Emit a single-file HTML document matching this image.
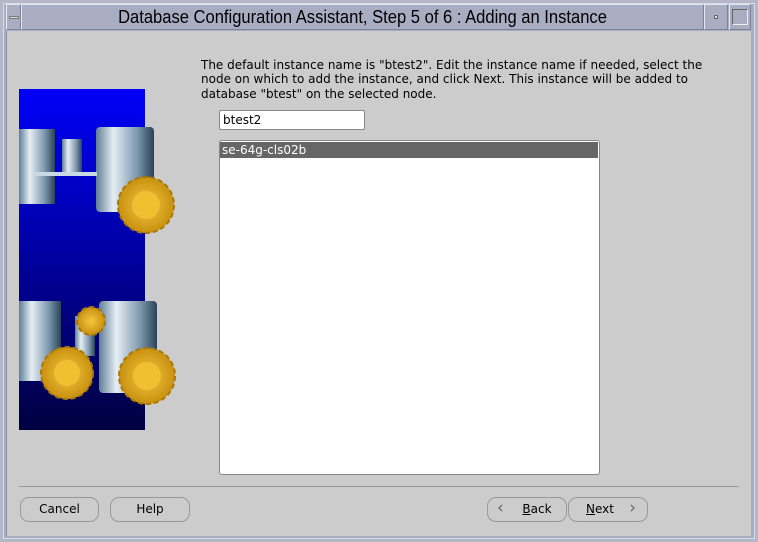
<!DOCTYPE html>
<html><head><meta charset="utf-8"><style>
*{margin:0;padding:0;box-sizing:border-box}
body{width:758px;height:542px;background:#b4b7c8;position:relative;overflow:hidden;font-family:"DejaVu Sans","Liberation Sans",sans-serif;}
.abs{position:absolute}
#frame{left:3px;top:3px;width:752px;height:536px;background:#a9adc2;border:1px solid #d8dae6;}
#client{left:6px;top:31px;width:745px;height:505px;background:#cccccc;border-left:1px solid #8a8ea2;}
.tb{position:absolute;top:4px;height:26px;border:1px solid #e6e8f0;border-right-color:#7e8296;border-bottom-color:#7e8296;}
.txt{font-size:12px;color:#000;line-height:14.3px}
.btn{position:absolute;top:497px;height:25px;border:1px solid #999;border-radius:9px;font-size:12px;text-align:center;line-height:23px;background:#cccccc}
</style></head><body>
<div class="abs" id="frame"></div>
<div class="tb" style="left:6px;width:15px"></div>
<div class="abs" style="left:9px;top:16px;width:10px;height:3px;border:1px solid #777;background:#ddd"></div>
<div class="tb" style="left:21px;width:683px"></div>
<div class="abs" style="left:21px;top:7px;width:683px;text-align:center;font-family:'Liberation Sans',sans-serif;font-size:18px;color:#000;transform:scaleX(0.92)">Database Configuration Assistant, Step 5 of 6 : Adding an Instance</div>
<div class="tb" style="left:704px;width:24px"></div>
<div class="abs" style="left:714px;top:15px;width:4px;height:4px;border:1px solid #666;background:#ddd"></div>
<div class="tb" style="left:729px;width:22px"></div>
<div class="abs" style="left:732px;top:9px;width:16px;height:16px;border:1px solid #666;border-right-color:#eee;border-bottom-color:#eee"></div>
<div class="abs" id="client"></div>

<svg class="abs" style="left:19px;top:89px" width="165" height="341">
<defs>
<linearGradient id="bg" x1="0" y1="0" x2="0" y2="1"><stop offset="0" stop-color="#0000f8"/><stop offset="0.45" stop-color="#0000a8"/><stop offset="1" stop-color="#000040"/></linearGradient>
<linearGradient id="cy" x1="0" y1="0" x2="1" y2="0"><stop offset="0" stop-color="#5f7f98"/><stop offset="0.3" stop-color="#e6eef4"/><stop offset="0.7" stop-color="#7f9ab0"/><stop offset="1" stop-color="#2a4258"/></linearGradient>
<radialGradient id="gd"><stop offset="0" stop-color="#f4c840"/><stop offset="1" stop-color="#c89010"/></radialGradient>
</defs>
<rect width="126" height="341" fill="url(#bg)"/>
<rect x="0" y="40" width="36" height="75" fill="url(#cy)"/>
<rect x="43" y="50" width="20" height="34" fill="url(#cy)"/>
<rect x="77" y="38" width="58" height="85" rx="4" fill="url(#cy)"/>
<rect x="16" y="83" width="62" height="4" fill="#c8d8e4"/>
<rect x="56" y="227" width="20" height="40" fill="url(#cy)"/>
<rect x="0" y="212" width="42" height="80" fill="url(#cy)"/>
<rect x="80" y="212" width="58" height="92" rx="4" fill="url(#cy)"/>
<g fill="url(#gd)" stroke="#a87808" stroke-width="2" stroke-dasharray="5 3">
<circle cx="127" cy="116" r="28"/><circle cx="48" cy="284" r="26"/><circle cx="128" cy="287" r="28"/><circle cx="72" cy="232" r="14"/>
</g>
<g fill="#f0c030"><circle cx="127" cy="116" r="14"/><circle cx="48" cy="284" r="13"/><circle cx="128" cy="287" r="14"/></g>
</svg>

<div class="abs txt" style="left:201px;top:58px;width:520px">The default instance name is "btest2". Edit the instance name if needed, select the node on which to add the instance, and click Next. This instance will be added to database "btest" on the selected node.</div>

<div class="abs" style="left:219px;top:110px;width:146px;height:20px;background:#fff;border:1px solid #888;border-radius:2px;font-size:12px;padding:2px 0 0 3px">btest2</div>

<div class="abs" style="left:219px;top:140px;width:381px;height:335px;background:#fff;border:1px solid #888;border-radius:3px"></div>
<div class="abs" style="left:220px;top:142px;width:378px;height:16px;background:#666;color:#fff;font-size:12px;padding:0 0 0 2px;line-height:16px">se-64g-cls02b</div>

<div class="abs" style="left:19px;top:486px;width:720px;height:1px;background:#999"></div>

<div class="btn" style="left:20px;width:79px">Cancel</div>
<div class="btn" style="left:110px;width:80px">Help</div>
<div class="btn" style="left:487px;width:80px"><span style="position:absolute;left:9px;top:-1px;color:#666;font-size:17px">‹</span><span style="margin-left:20px"><u>B</u>ack</span></div>
<div class="btn" style="left:568px;width:80px"><span style="margin-left:-16px"><u>N</u>ext</span><span style="position:absolute;right:11px;top:-1px;color:#666;font-size:17px">›</span></div>
</body></html>
